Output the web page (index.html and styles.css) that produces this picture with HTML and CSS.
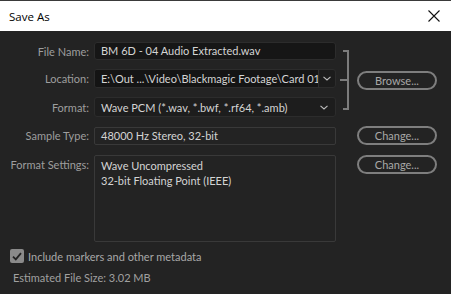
FILE: index.html
```html
<!DOCTYPE html>
<html>
<head>
<meta charset="utf-8">
<link rel="stylesheet" href="styles.css">
</head>
<body>
<div class="window">
  <div class="titlebar">
    <span class="title">Save As</span>
    <svg class="close" width="12" height="12" viewBox="0 0 12 12"><path d="M0.5 0.5 L11.5 11.5 M11.5 0.5 L0.5 11.5" stroke="#111" stroke-width="1.1" fill="none"/></svg>
  </div>
  <div class="content">
    <div class="group">
      <div class="rows">
        <div class="row r1">
          <label class="lbl">File Name:</label>
          <div class="field input">BM 6D - 04 Audio Extracted.wav</div>
        </div>
        <div class="row r2">
          <label class="lbl">Location:</label>
          <div class="field combo">
            <span class="combo-text">E:\Out ...\Video\Blackmagic Footage\Card 01</span>
            <span class="combo-btn"><svg width="8" height="5" viewBox="0 0 8 5"><path d="M0.5 0.8 L4 4 L7.5 0.8" stroke="#bdbdbd" stroke-width="1.1" fill="none"/></svg></span>
          </div>
        </div>
        <div class="row r3">
          <label class="lbl">Format:</label>
          <div class="field select">
            <span>Wave PCM (*.wav, *.bwf, *.rf64, *.amb)</span>
            <svg width="8" height="5" viewBox="0 0 8 5"><path d="M0.5 0.8 L4 4 L7.5 0.8" stroke="#bdbdbd" stroke-width="1.1" fill="none"/></svg>
          </div>
        </div>
      </div>
      <div class="bracket"></div>
      <button class="btn browse">Browse...</button>
    </div>
    <div class="row r4">
      <label class="lbl">Sample Type:</label>
      <div class="field boxed">48000 Hz Stereo, 32-bit</div>
      <button class="btn change">Change...</button>
    </div>
    <div class="row r5">
      <label class="lbl">Format Settings:</label>
      <div class="field boxed settings">Wave Uncompressed<br>32-bit Floating Point (IEEE)</div>
      <button class="btn change">Change...</button>
    </div>
    <div class="check-row">
      <span class="checkbox"><svg width="10" height="9" viewBox="0 0 10 9"><path d="M1 4.6 L3.8 7.4 L9 1.2" stroke="#222" stroke-width="1.8" fill="none"/></svg></span>
      <span class="check-label">Include markers and other metadata</span>
    </div>
    <div class="estimate">Estimated File Size: 3.02 MB</div>
    <div class="footer">
      <button class="fbtn ok" aria-label="OK"></button>
      <button class="fbtn cancel" aria-label="Cancel"></button>
    </div>
  </div>
</div>
</body>
</html>
```
FILE: styles.css
```css
* { box-sizing: border-box; }
html, body { margin: 0; padding: 0; }
body {
  width: 451px;
  height: 294px;
  overflow: hidden;
  background: #232323;
  font-family: "Lato", "Open Sans", sans-serif;
  font-size: 11px;
}
.window {
  width: 451px;
  height: 294px;
  display: flex;
  flex-direction: column;
  overflow: hidden;
}
.titlebar {
  height: 31px;
  flex: none;
  background: #ffffff;
  border-top: 1px solid #3a3a3a;
  display: flex;
  align-items: center;
  justify-content: space-between;
  padding: 0 9px 0 9px;
}
.title {
  font-family: "Open Sans", "Noto Sans", sans-serif;
  font-size: 11.5px;
  color: #000;
}
.close { margin-right: 2px; }
.content {
  flex: 1;
  display: flex;
  flex-direction: column;
  padding-top: 11px;
  color: #c8c8c8;
}
.group {
  display: flex;
  align-items: center;
}
.rows {
  display: flex;
  flex-direction: column;
  gap: 9px;
}
.row {
  display: flex;
  align-items: center;
}
.lbl {
  width: 89px;
  margin-right: 5px;
  color: #9e9e9e;
  flex: none;
  display: flex;
  justify-content: flex-end;
  white-space: nowrap;
}
.field {
  width: 242px;
  flex: none;
  color: #d4d4d4;
  border-radius: 3px;
  white-space: nowrap;
  overflow: hidden;
}
.input {
  height: 18px;
  background: #161616;
  border: 1px solid #2c2c2c;
  padding: 0 6px;
  line-height: 16px;
}
.combo {
  height: 19px;
  display: flex;
  background: #1c1c1c;
  border: 1px solid #2c2c2c;
}
.combo-text {
  width: 224px;
  background: #141414;
  padding: 0 6px;
  line-height: 17px;
  overflow: hidden;
  border-right: 1px solid #2e2e2e;
}
.combo-btn {
  flex: 1;
  display: flex;
  align-items: center;
  justify-content: center;
}
.select {
  height: 20px;
  background: #1d1d1d;
  border: 1px solid #2c2c2c;
  padding: 0 7px 0 6px;
  display: flex;
  align-items: center;
  justify-content: space-between;
}
.bracket {
  position: relative;
  width: 6px;
  height: 60px;
  margin-left: 7px;
  margin-top: 1px;
  border: 2px solid #7c7c7c;
  border-left: none;
}
.bracket::after {
  content: "";
  position: absolute;
  left: -3px;
  top: 27px;
  width: 9px;
  height: 2px;
  background: #7c7c7c;
}
.btn {
  width: 80px;
  height: 19px;
  border-radius: 10px;
  border: 2px solid #7e7e7e;
  background: transparent;
  color: #a8a8a8;
  font-family: "Lato", "Open Sans", sans-serif;
  font-size: 11px;
  padding: 0;
  line-height: 15px;
  flex: none;
}
.browse { margin-left: 8px; margin-top: 1px; }
.r4 { margin-top: 9px; align-items: flex-start; }
.r4 .lbl { line-height: 18px; margin-top: 1px; }
.boxed {
  background: transparent;
  border: 1px solid #393939;
  border-radius: 2px;
}
.r4 .boxed {
  height: 18px;
  line-height: 16px;
  padding: 0 6px;
  margin-top: 1px;
}
.change { margin-left: 21px; }
.r5 { margin-top: 10px; align-items: flex-start; }
.r5 .lbl { line-height: 15px; margin-top: 2px; }
.settings {
  height: 87px;
  padding: 2px 6px;
  line-height: 15px;
  border-radius: 2px;
}
.r5 .change { margin-top: 0; }
.check-row {
  display: flex;
  align-items: center;
  margin-top: 7px;
  padding-left: 10px;
}
.checkbox {
  width: 14px;
  height: 14px;
  background: #8a8a8a;
  border-radius: 2px;
  display: flex;
  align-items: center;
  justify-content: center;
  margin-right: 4px;
}
.check-label { color: #a8a8a8; }
.estimate {
  margin-top: 8px;
  padding-left: 13px;
  color: #a0a0a0;
}
.footer {
  display: flex;
  justify-content: flex-end;
  gap: 16px;
  padding-right: 17px;
  flex: none;
  height: 20px;
  align-items: flex-start;
  padding-top: 10px;
}
.fbtn {
  width: 70px;
  height: 20px;
  border-radius: 4px;
  border: none;
  padding: 0;
  flex: none;
}
.ok { background: #d8d8d8; }
.cancel { background: #8a8a8a; }
```
